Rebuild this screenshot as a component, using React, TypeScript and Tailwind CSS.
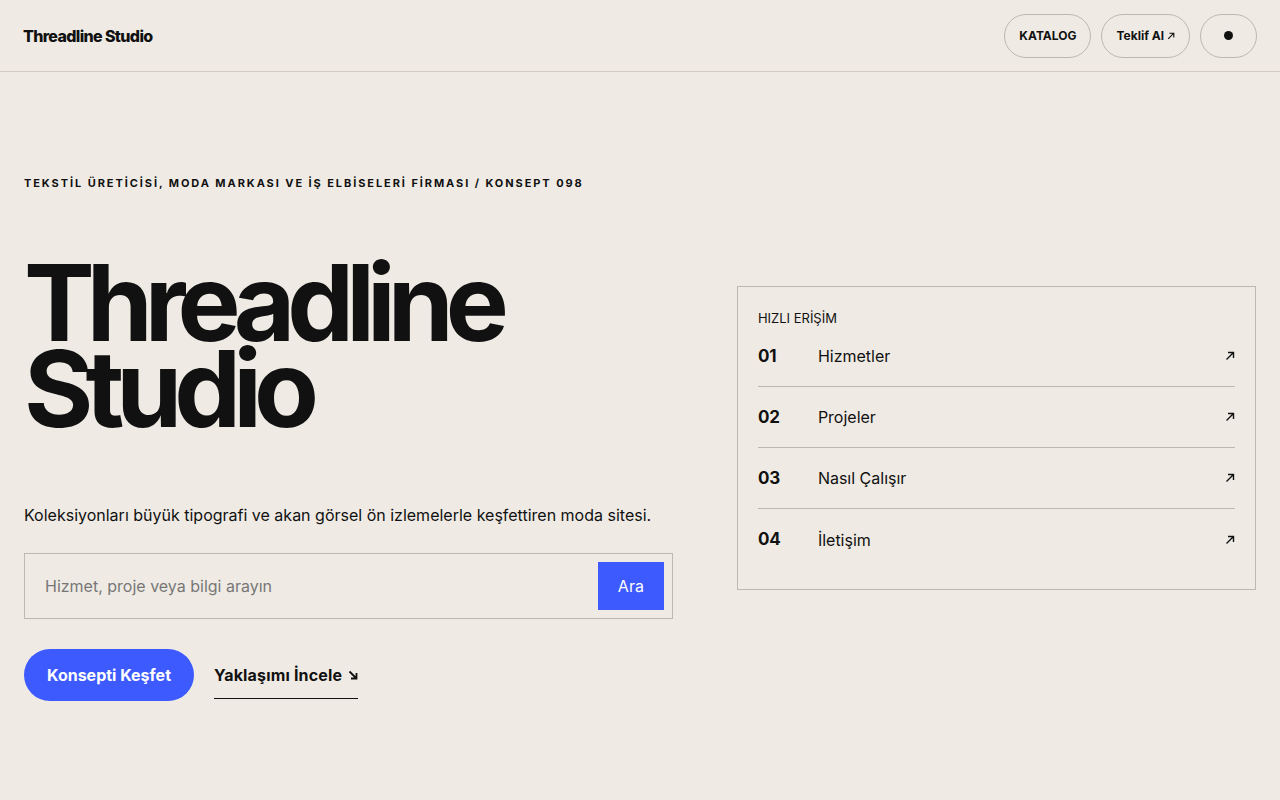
import React from 'react';

const links = [
    { no: '01', label: 'Hizmetler' },
    { no: '02', label: 'Projeler' },
    { no: '03', label: 'Nasıl Çalışır' },
    { no: '04', label: 'İletişim' },
];

const ArrowUR = ({ size = 10 }: { size?: number }) => (
    <svg width={size} height={size} viewBox="0 0 10 10" fill="none" stroke="currentColor" strokeWidth="1.4">
        <path d="M1.5 8.5 L8.5 1.5 M3 1.5 H8.5 V7" />
    </svg>
);

const ArrowDR = ({ size = 10 }: { size?: number }) => (
    <svg width={size} height={size} viewBox="0 0 10 10" fill="none" stroke="currentColor" strokeWidth="1.8">
        <path d="M1.5 1.5 L8.5 8.5 M3 8.5 H8.5 V3" />
    </svg>
);

const App = () => {
    return (
        <div className="min-h-screen bg-[#efebe4] text-[#111] font-['Inter',sans-serif]">
            <header className="h-[72px] flex items-center justify-between px-[23px] border-b border-[#cfc9c0]">
                <div className="text-[16px] font-extrabold tracking-[-0.04em]">Threadline Studio</div>
                <nav className="flex items-center gap-[10px]">
                    <button className="h-[44px] px-[14px] rounded-full border border-[#bdb8b0] text-[12px] font-bold">KATALOG</button>
                    <button className="h-[44px] px-[14px] rounded-full border border-[#bdb8b0] text-[12px] font-bold flex items-center gap-[3px]">
                        Teklif Al <ArrowUR size={8} />
                    </button>
                    <button className="h-[44px] w-[57px] rounded-full border border-[#bdb8b0] flex items-center justify-center">
                        <span className="w-[9px] h-[9px] rounded-full bg-[#111]" />
                    </button>
                </nav>
            </header>

            <main className="px-[24px] pt-[103px] grid grid-cols-[5fr_4fr] gap-16 items-center">
                <div>
                    <p className="text-[11px] font-bold tracking-[0.175em] uppercase">
                        TEKSTİL ÜRETİCİSİ, MODA MARKASI VE İŞ ELBİSELERİ FİRMASI / KONSEPT 098
                    </p>
                    <h1 className="mt-[68px] text-[106px] leading-[0.82] font-bold tracking-[-0.075em]">
                        Threadline<br />Studio
                    </h1>
                    <p className="mt-[70px] text-[16px]">
                        Koleksiyonları büyük tipografi ve akan görsel ön izlemelerle keşfettiren moda sitesi.
                    </p>
                    <div className="mt-[26px] flex items-center border border-[#bdb8b0] h-[66px] pl-[20px] pr-[8px]">
                        <input
                            className="flex-1 bg-transparent outline-none text-[16px] placeholder:text-[#777]"
                            placeholder="Hizmet, proje veya bilgi arayın"
                        />
                        <button className="h-[48px] w-[66px] bg-[#3d5afe] text-white text-[16px]">Ara</button>
                    </div>
                    <div className="mt-[30px] flex items-center gap-[20px]">
                        <button className="h-[52px] px-[23px] rounded-full bg-[#3d5afe] text-white text-[16px] font-bold">
                            Konsepti Keşfet
                        </button>
                        <a className="flex items-center gap-[6px] text-[16px] font-bold tracking-[0.01em] pb-[11px] mt-[12px] border-b border-[#111]">
                            Yaklaşımı İncele <ArrowDR size={10} />
                        </a>
                    </div>
                </div>

                <div className="border border-[#bdb8b0] px-[20px] pt-[22px] pb-[19px]">
                    <div className="text-[13px] uppercase">HIZLI ERİŞİM</div>
                    <ul className="-mt-[2px]">
                        {links.map((l, i) => (
                            <li
                                key={l.no}
                                className={`flex items-center h-[61px] ${i < links.length - 1 ? 'border-b border-[#bdb8b0]' : ''}`}
                            >
                                <span className="w-[60px] text-[17px] font-bold">{l.no}</span>
                                <span className="flex-1 text-[16px]">{l.label}</span>
                                <ArrowUR size={10} />
                            </li>
                        ))}
                    </ul>
                </div>
            </main>
        </div>
    );
};

export default App;
